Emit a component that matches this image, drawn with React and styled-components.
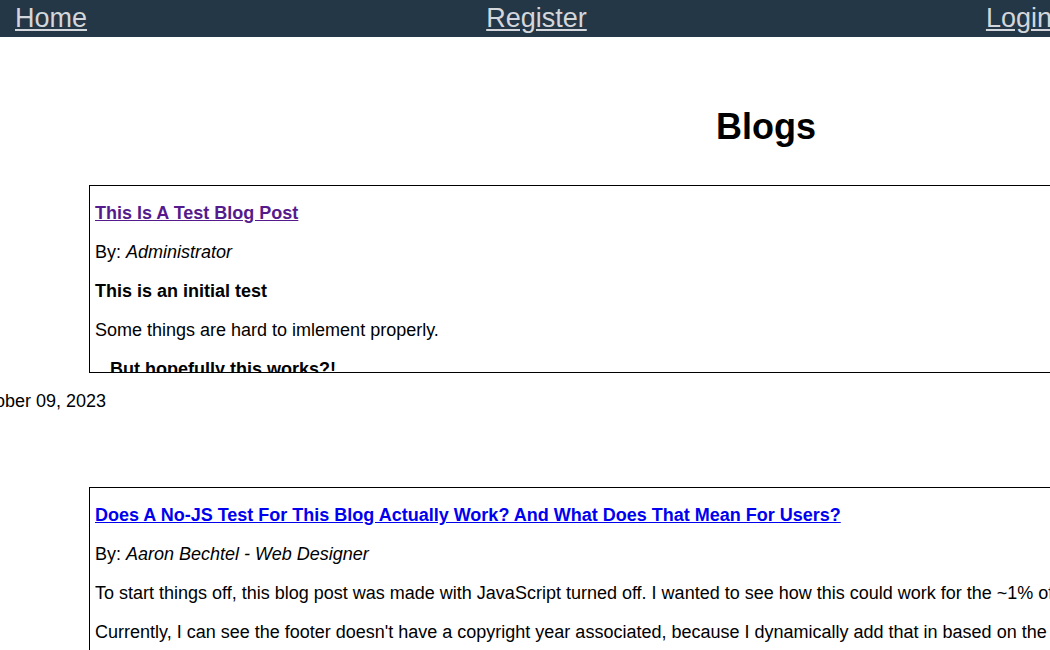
import React from "react";
import styled, { createGlobalStyle } from "styled-components";

const GlobalStyle = createGlobalStyle`
  html, body {
    margin: 0;
    padding: 0;
    overflow: hidden;
  }
  body {
    font-family: "Liberation Sans", Arial, sans-serif;
    font-size: 18px;
    color: #000;
    background: #fff;
  }
`;

const NavBar = styled.nav`
  display: flex;
  justify-content: space-between;
  align-items: center;
  box-sizing: border-box;
  width: calc(100% + 17px);
  padding: 3px 15px;
  background: #243746;
`;

const NavLink = styled.a`
  font-size: 27px;
  color: #d3d6da;
  text-decoration: underline;
`;

const Main = styled.main`
  margin-left: 89px;
  width: 1354px;
`;

const Heading = styled.h1`
  font-size: 36px;
  font-weight: bold;
  text-align: center;
  margin: 69px 0 37px;
`;

const Card = styled.article`
  box-sizing: content-box;
  height: 186px;
  padding: 0 5px;
  border: 1px solid #000;
  overflow: hidden;
`;

const Title = styled.p`
  margin: 17px 0 18px;
  font-size: 18px;
  font-weight: bold;
`;

const TitleLink = styled.a`
  color: ${(p) => (p.$visited ? "#551a8b" : "#0000ee")};
  text-decoration: underline;
`;

const Para = styled.p`
  margin: 18px 0;
  font-weight: ${(p) => (p.$bold ? "bold" : "normal")};
  padding-left: ${(p) => (p.$indent ? "15px" : "0")};
`;

const DateLine = styled.p`
  margin: 18px 0 75px -122px;
  white-space: nowrap;
`;

const posts = [
  {
    title: "This Is A Test Blog Post",
    author: "Administrator",
    visited: true,
    body: [
      { text: "This is an initial test", bold: true },
      { text: "Some things are hard to imlement properly." },
      { text: "But hopefully this works?!", bold: true, indent: true },
    ],
    date: "October 09, 2023",
  },
  {
    title:
      "Does A No-JS Test For This Blog Actually Work? And What Does That Mean For Users?",
    author: "Aaron Bechtel - Web Designer",
    visited: false,
    body: [
      {
        text: "To start things off, this blog post was made with JavaScript turned off. I wanted to see how this could work for the ~1% of users who browse without it.",
      },
      {
        text: "Currently, I can see the footer doesn't have a copyright year associated, because I dynamically add that in based on the current year.",
      },
      { text: "So what does that mean for users?", bold: true },
    ],
    date: "October 10, 2023",
  },
];

const App = () => {
  return (
    <>
      <GlobalStyle />
      <NavBar>
        <NavLink href="#">Home</NavLink>
        <NavLink href="#">Register</NavLink>
        <NavLink href="#">Login</NavLink>
      </NavBar>
      <Main>
        <Heading>Blogs</Heading>
        {posts.map((post) => (
          <section key={post.title}>
            <Card>
              <Title>
                <TitleLink href="#" $visited={post.visited}>
                  {post.title}
                </TitleLink>
              </Title>
              <Para>
                By: <i>{post.author}</i>
              </Para>
              {post.body.map((b, i) => (
                <Para key={i} $bold={b.bold} $indent={b.indent}>
                  {b.text}
                </Para>
              ))}
            </Card>
            <DateLine>{post.date}</DateLine>
          </section>
        ))}
      </Main>
    </>
  );
};

export default App;
